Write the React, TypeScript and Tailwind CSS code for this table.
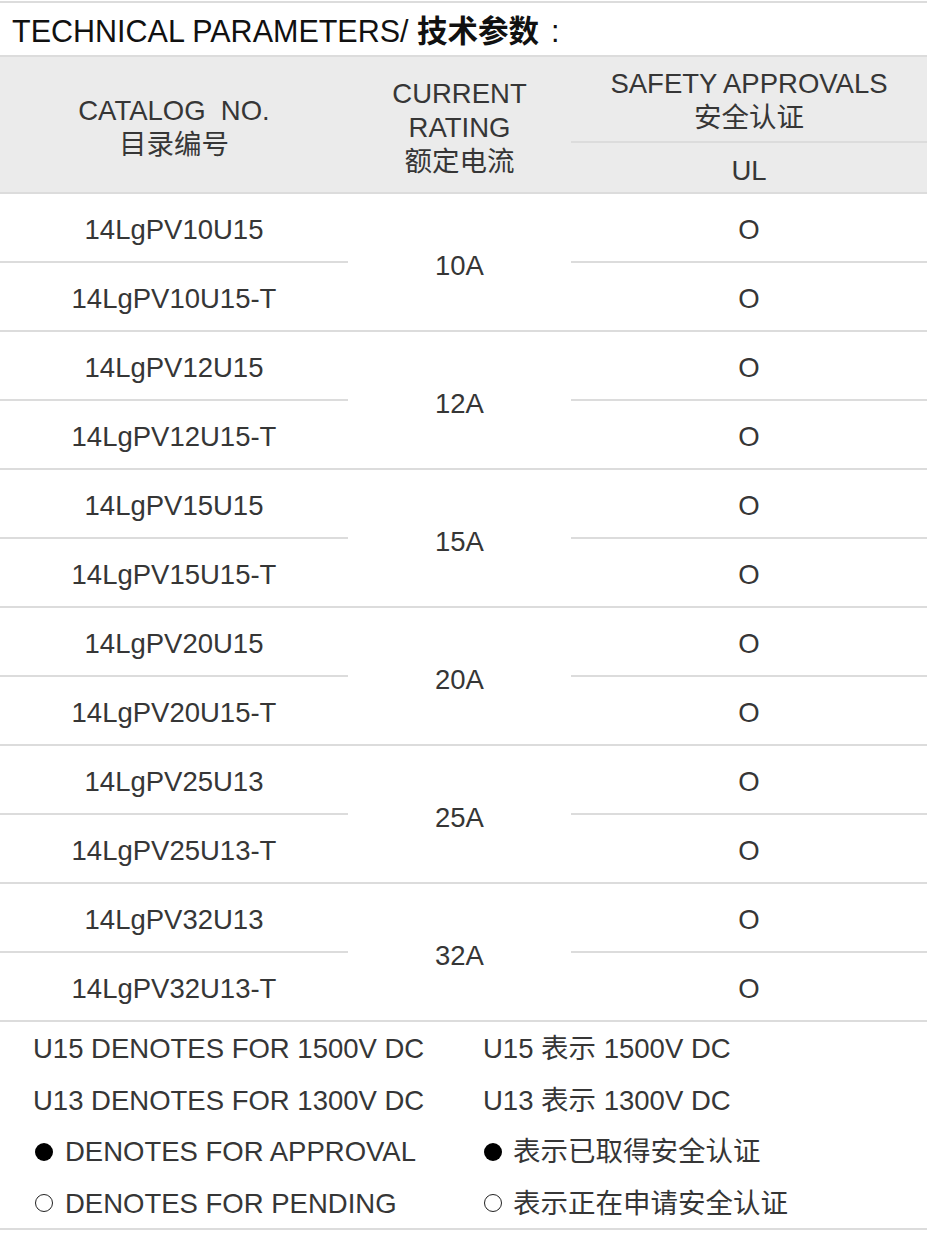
import React from "react";

type Group = {
  rating: string;
  models: string[];
};

const groups: Group[] = [
  { rating: "10A", models: ["14LgPV10U15", "14LgPV10U15-T"] },
  { rating: "12A", models: ["14LgPV12U15", "14LgPV12U15-T"] },
  { rating: "15A", models: ["14LgPV15U15", "14LgPV15U15-T"] },
  { rating: "20A", models: ["14LgPV20U15", "14LgPV20U15-T"] },
  { rating: "25A", models: ["14LgPV25U13", "14LgPV25U13-T"] },
  { rating: "32A", models: ["14LgPV32U13", "14LgPV32U13-T"] },
];

const Dot = ({ filled }: { filled?: boolean }) => (
  <span
    className={
      filled
        ? "inline-block w-[18px] h-[18px] rounded-full bg-black shrink-0"
        : "inline-block w-[18px] h-[18px] rounded-full border-[1.5px] border-[#222] shrink-0"
    }
  />
);

const App = () => {
  return (
    <div className="w-[927px] min-h-[1235px] bg-white pt-px font-['Liberation_Sans','Noto_Sans_CJK_SC',sans-serif] text-[#363636]">
      {/* title */}
      <div className="border-t-2 border-[#dcdcdc] h-[54px] flex items-center pl-3 pt-1">
        <h1 className="text-[30.5px] text-[#111] leading-none whitespace-nowrap">
          TECHNICAL PARAMETERS/ <span className="font-bold">技术参数</span>
          <span className="ml-3">:</span>
        </h1>
      </div>

      {/* header */}
      <div className="grid grid-cols-[348px_223px_1fr] border-y-2 border-[#dcdcdc] bg-[#ebebeb] h-[139px] text-[27.5px] leading-[34px]">
        <div className="flex flex-col items-center justify-center pt-1.5">
          <span className="whitespace-pre">CATALOG  NO.</span>
          <span>目录编号</span>
        </div>
        <div className="flex flex-col items-center justify-center pt-1.5">
          <span>CURRENT</span>
          <span>RATING</span>
          <span>额定电流</span>
        </div>
        <div className="flex flex-col">
          <div className="h-[86px] flex flex-col items-center justify-center border-b-2 border-[#dcdcdc] pt-1">
            <span>SAFETY APPROVALS</span>
            <span>安全认证</span>
          </div>
          <div className="flex-1 flex items-center justify-center pt-1.5">UL</div>
        </div>
      </div>

      {/* rows */}
      {groups.map((group) => (
        <div
          key={group.rating}
          className="grid grid-cols-[348px_223px_1fr] border-b-2 border-[#dcdcdc] text-[27.5px]"
        >
          <div className="flex flex-col">
            <div className="h-[69px] flex items-center justify-center border-b-2 border-[#dcdcdc] pt-1">
              {group.models[0]}
            </div>
            <div className="h-[67px] flex items-center justify-center pt-1">{group.models[1]}</div>
          </div>
          <div className="flex items-center justify-center pt-2">{group.rating}</div>
          <div className="flex flex-col">
            <div className="h-[69px] flex items-center justify-center border-b-2 border-[#dcdcdc] pt-1">O</div>
            <div className="h-[67px] flex items-center justify-center pt-1">O</div>
          </div>
        </div>
      ))}

      {/* notes */}
      <div className="border-b-2 border-[#dcdcdc] pl-[33px] text-[27.5px] leading-none">
        <div className="grid grid-cols-[450px_1fr] h-[51.5px] items-center pt-0.5">
          <span>U15 DENOTES FOR 1500V DC</span>
          <span>U15 表示 1500V DC</span>
        </div>
        <div className="grid grid-cols-[450px_1fr] h-[51.5px] items-center pt-0.5">
          <span>U13 DENOTES FOR 1300V DC</span>
          <span>U13 表示 1300V DC</span>
        </div>
        <div className="grid grid-cols-[450px_1fr] h-[51.5px] items-center pt-0.5">
          <span className="flex items-center gap-3 pl-0.5">
            <Dot filled />
            DENOTES FOR APPROVAL
          </span>
          <span className="flex items-center gap-[11px] pl-px">
            <Dot filled />
            表示已取得安全认证
          </span>
        </div>
        <div className="grid grid-cols-[450px_1fr] h-[51.5px] items-center pt-0.5">
          <span className="flex items-center gap-3 pl-0.5">
            <Dot />
            DENOTES FOR PENDING
          </span>
          <span className="flex items-center gap-[11px] pl-px">
            <Dot />
            表示正在申请安全认证
          </span>
        </div>
      </div>
    </div>
  );
};

export default App;
